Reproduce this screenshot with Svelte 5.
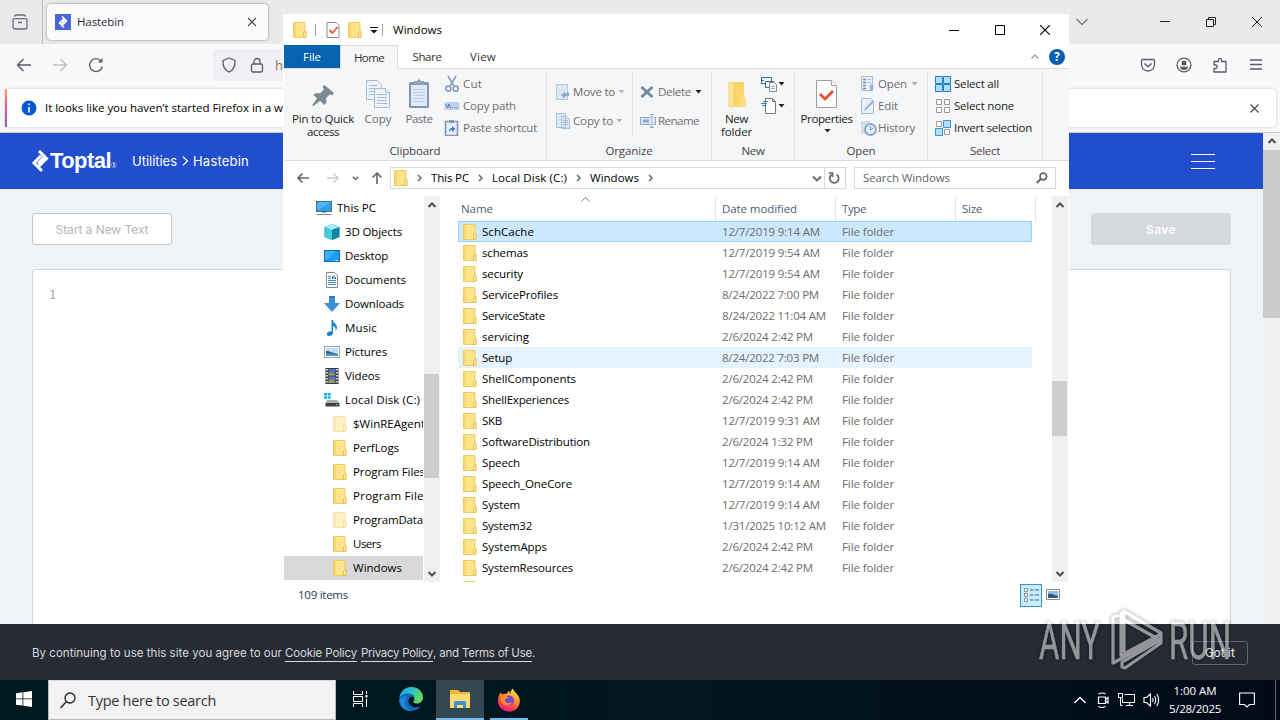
<script>
  // Spreads letter spacing so that a label takes the given width.
  function fit(node, w) {
    if (!w) return;
    const natural = node.getBoundingClientRect().width;
    const n = node.textContent.length;
    node.style.letterSpacing = (w - natural) / n + 'px';
  }

  const tree = [
    ['This PC', 'pc', 0, 39], ['3D Objects', 'cube', 1, 57], ['Desktop', 'desktop', 1, 43],
    ['Documents', 'doc', 1, 61], ['Downloads', 'down', 1, 59], ['Music', 'music', 1, 32],
    ['Pictures', 'pic', 1, 42], ['Videos', 'video', 1, 35], ['Local Disk (C:)', 'disk', 1, 75],
    ['$WinREAgent', 'pale', 2, 72], ['PerfLogs', 'folder', 2, 46], ['Program Files', 'folder', 2, 72],
    ['Program Files (x86)', 'folder', 2, 107], ['ProgramData', 'pale', 2, 70], ['Users', 'folder', 2, 28],
    ['Windows', 'folder', 2, 49]
  ];
  const files = [
    ['SchCache', 52, '12/7/2019 9:14 AM', 98], ['schemas', 46, '12/7/2019 9:54 AM', 98],
    ['security', 41, '12/7/2019 9:54 AM', 98], ['ServiceProfiles', 76, '8/24/2022 7:00 PM', 97],
    ['ServiceState', 63, '8/24/2022 11:04 AM', 104], ['servicing', 47, '2/6/2024 2:42 PM', 91],
    ['Setup', 30, '8/24/2022 7:03 PM', 97], ['ShellComponents', 94, '2/6/2024 2:42 PM', 91],
    ['ShellExperiences', 87, '2/6/2024 2:42 PM', 91], ['SKB', 20, '12/7/2019 9:31 AM', 98],
    ['SoftwareDistribution', 108, '2/6/2024 1:32 PM', 91], ['Speech', 38, '12/7/2019 9:14 AM', 98],
    ['Speech_OneCore', 90, '12/7/2019 9:14 AM', 98], ['System', 38, '12/7/2019 9:14 AM', 98],
    ['System32', 50, '1/31/2025 10:12 AM', 104], ['SystemApps', 65, '2/6/2024 2:42 PM', 91],
    ['SystemResources', 91, '2/6/2024 2:42 PM', 91], ['', 0, '', 0]
  ];
</script>

{#snippet t(text, w)}<span class="t" use:fit={w}>{text}</span>{/snippet}

{#snippet folder(pale)}
  <svg width="14" height="16" viewBox="0 0 14 16" opacity={pale ? 0.5 : 1}>
    <path d="M.5.5h11.500v9.500h1v5.500H.5z" fill="#fde38b" stroke="#eccb63" />
    <path d="M1 1h2v14H1z" fill="#fbd668" />
    <path d="M10.500 15.500v-4.500l1-1.500h1.500v6z" fill="#fbe9a4" stroke="#e3b93f" stroke-width=".8" />
  </svg>
{/snippet}

{#snippet caret(c)}<svg class="caret" width="7" height="4" viewBox="0 0 7 4"><path d="M.5 0h6L3.500 3.500z" fill={c} /></svg>{/snippet}

{#snippet chev(d)}
  <svg width="10" height="10" viewBox="0 0 10 10" fill="none" stroke="#505050" stroke-width="2"><path d={d === 'up' ? 'M1.500 7L5 3.500 8.500 7' : 'M1.500 3L5 6.500 8.500 3'} /></svg>
{/snippet}

{#snippet crumb()}<svg class="crumb" width="5" height="8" viewBox="0 0 5 8" fill="none" stroke="#666" stroke-width="1.500"><path d="M1 1l3 3-3 3" /></svg>{/snippet}

{#snippet treeIcon(k)}
  {#if k === 'folder' || k === 'pale'}
    {@render folder(k === 'pale')}
  {:else}
    <svg width="16" height="16" viewBox="0 0 16 16">
      {#if k === 'pc'}
        <rect x=".5" y="1.500" width="15" height="10" fill="#4db8f0" stroke="#3f6f8f" /><path d="M1 11L15 2v9z" fill="#2d9fe4" /><path d="M1 14.500h14" stroke="#75828a" /><path d="M6 12h4v1H6z" fill="#9aa6ad" />
      {:else if k === 'cube'}
        <path d="M8 0l7.500 3v10L8 16 .5 13V3z" fill="#2cb5c9" /><path d="M8 0l7.500 3L8 6 .5 3z" fill="#a6ecf2" /><path d="M8 6l7.500-3v10L8 16z" fill="#1287a0" /><path d="M8 6v10L.5 13V3z" fill="#42cbd8" />
      {:else if k === 'desktop'}
        <rect x=".5" y="2.500" width="15" height="11" fill="#1c9bf0" stroke="#0e6db8" /><path d="M1 3h11L3 12H1z" fill="#38b0fa" /><path d="M10 12.500h1m1 0h2" stroke="#d4efff" />
      {:else if k === 'doc'}
        <path d="M2.500.5h8l3 3v12h-11z" fill="#fff" stroke="#7b8794" /><path d="M4 4.500h3m-3 2h3m-3 2h8m-8 2h8m-8 2h8" stroke="#4b86bb" /><path d="M8.500 4v3M10 3v4M11.500 5v2" stroke="#2f75b0" />
      {:else if k === 'down'}
        <path d="M5 0h6v7h5l-8 9-8-9h5z" fill="#3d8fd8" /><path d="M5 0h6v2H5z" fill="#2c7cc5" />
      {:else if k === 'music'}
        <path d="M7.500 0h1.500c.3 3.500 4.500 4 4 8-.1 1.300-1 2-1.500 2.600.8-2.700-1-4.100-2.500-4.600V13c0 1.800-1.800 3-3.800 3S2.500 14.800 3 13.200C3.500 11.500 5.800 11 7.500 11.700z" fill="#1a83d4" />
      {:else if k === 'pic'}
        <rect x=".5" y="2.500" width="15" height="11" fill="#fff" stroke="#97a2aa" /><path d="M2 4h12v8H2z" fill="#b9e1f5" /><path d="M2 7c5 0 5 2 12 3v2H2z" fill="#34606f" /><path d="M2 9l12 1.500V12H2z" fill="#4f90c5" />
      {:else if k === 'video'}
        <path d="M1.500 0h13v16h-13z" fill="#3a3a3c" /><path d="M4.500 1h7v6.500h-7z" fill="#4e74b8" /><path d="M4.500 8.500h7V15h-7z" fill="#6b70b8" /><path d="M4.500 6l3-2 4 3.500h-7zM4.500 13l4-2 3 4h-7z" fill="#8fa44b" /><path d="M3 1v15M13 1v15" stroke="#fff" stroke-width="1.500" stroke-dasharray="1.500 1.500" />
      {:else if k === 'disk'}
        <path d="M0 1h3v2.500H0zM3.700 1h3v2.500h-3zM0 4.200h3v2.500H0zM3.700 4.200h3v2.500h-3z" fill="#0bb5d8" /><path d="M3 8h10l2.500 3h-14z" fill="#a9aeb2" /><path d="M1.500 11h14v3.500h-14z" fill="#3c4146" /><path d="M12 12.700h2" stroke="#48e06c" />
      {/if}
    </svg>
  {/if}
{/snippet}

<div class="screen">
  <div class="firefox">
    <div class="tabbar">
      <div class="view"><svg width="18" height="18" viewBox="0 0 18 18" fill="none" stroke="#6b6b72" stroke-width="1.300"><rect x="2" y="5.700" width="14" height="10.300" rx="2" /><path d="M3.500 3.500C4 2 4.500 2 5.500 2h7c1 0 1.500 0 2 1.500M7 9.500h4" /></svg></div>
      <div class="tab">
        <svg width="16" height="16" viewBox="0 0 16 16"><path d="M0 0h16v16H0z" fill="#4867d6" /><path d="M7 2.500l4.500 4.500-4 4M9 13.500L4.500 9l4-4M6 10.500l4-5" fill="none" stroke="#fff" stroke-width="1.600" /></svg>
        <span class="tabname">{@render t('Hastebin', 47)}</span>
        <svg width="10" height="10" viewBox="0 0 10 10" stroke="#47474c" stroke-width="1.100"><path d="M1 1l8 8M9 1L1 9" /></svg>
      </div>
      <div class="fill"></div>
      <svg class="tabmenu" width="14" height="8" viewBox="0 0 14 8" fill="none" stroke="#77777d" stroke-width="1.300"><path d="M1.500 1L7 6.500 12.500 1" /></svg>
      <div class="wctl"><svg width="10" height="10" viewBox="0 0 10 10" stroke="#222"><path d="M0 4.500h10" /></svg></div>
      <div class="wctl"><svg width="10" height="10" viewBox="0 0 10 10" fill="none" stroke="#222"><path d="M.5 2.500h7v7h-7zM2.500 2.500v-2h7v7h-2" /></svg></div>
      <div class="wctl"><svg width="10" height="10" viewBox="0 0 10 10" stroke="#222"><path d="M0 0l10 10M10 0L0 10" /></svg></div>
    </div>
    <div class="navbar">
      <svg class="nb" width="16" height="16" viewBox="0 0 16 16" fill="none" stroke="#5b5b66" stroke-width="1.400"><path d="M15 8H1.500M7.500 2L1.500 8l6 6" /></svg>
      <svg class="nb" width="16" height="16" viewBox="0 0 16 16" fill="none" stroke="#bfbfc6" stroke-width="1.400"><path d="M1 8h13.500M8.500 2l6 6-6 6" /></svg>
      <svg class="nb" width="16" height="16" viewBox="0 0 16 16" fill="none" stroke="#5b5b66" stroke-width="1.400"><path d="M14.300 9.500A6.400 6.400 0 1 1 13 4" /><path d="M14.500.8v4.700H10z" fill="#5b5b66" stroke="none" /></svg>
      <div class="url">
        <svg width="16" height="16" viewBox="0 0 16 16" fill="none" stroke="#5b5b66" stroke-width="1.300"><path d="M8 1l6 2.500c.3 5-1.500 9.500-6 11.500-4.500-2-6.300-6.500-6-11.500z" stroke-linejoin="round" /></svg>
        <svg width="16" height="16" viewBox="0 0 16 16" fill="none" stroke="#5b5b66" stroke-width="1.300"><rect x="2.500" y="7" width="11" height="8" rx="1.500" /><path d="M5 7V4.500a3 3 0 0 1 6 0V7" /></svg>
        <span>h</span>
      </div>
      <div class="tools">
        <svg width="16" height="16" viewBox="0 0 16 16" fill="none" stroke="#5b5b66" stroke-width="1.300"><path d="M2.500 2.500h11q1 0 1 1V7.500a6.500 6.500 0 0 1-13 0v-4q0-1 1-1z" /><path d="M4.500 6.500L8 9.800l3.500-3.300" stroke-width="1.500" /></svg>
        <svg width="16" height="16" viewBox="0 0 16 16"><circle cx="8" cy="8" r="6.900" fill="none" stroke="#5b5b66" stroke-width="1.300" /><circle cx="8" cy="6" r="2.500" fill="#5b5b66" /><path d="M4 9.800h8c0 1.700-1.500 3.200-4 3.200s-4-1.500-4-3.200z" fill="#5b5b66" /></svg>
        <svg width="16" height="16" viewBox="0 0 16 16" fill="none" stroke="#5b5b66" stroke-width="1.300"><path d="M2 15V11.500h1.500a1.500 1.500 0 0 0 0-3.500H2V4.500h4.500V3a1.500 1.500 0 0 1 3.200 0v1.500H14V15z" stroke-linejoin="round" /></svg>
        <svg width="16" height="16" viewBox="0 0 16 16" stroke="#5b5b66" stroke-width="1.300"><path d="M2 3h12M2 7.500h12M2 12h12" /></svg>
      </div>
    </div>
    <div class="infobar">
      <div class="card">
        <svg width="16" height="16" viewBox="0 0 16 16"><circle cx="8" cy="8" r="7.500" fill="#0757cf" /><path d="M8 3.500v1.800M8 7v5.500" stroke="#fff" stroke-width="1.500" /></svg>
        <span class="msg">{@render t('It looks like you haven’t started Firefox in a wh', 245)}</span>
        <svg width="9" height="9" viewBox="0 0 9 9" stroke="#47474c" stroke-width="1.100"><path d="M.5.5l8 8M8.500.5l-8 8" /></svg>
      </div>
    </div>
    <div class="content">
      <div class="page">
        <div class="top">
          <svg width="17" height="24" viewBox="0 0 17 24" fill="none" stroke="#fff" stroke-width="3"><path d="M7 2l7.500 7.500L7 17M10 22L2 13.800l7-7M6 14.500l6-6" /></svg>
          <span class="logo">{@render t('Toptal', 61)}</span><span class="reg">®</span>
          <span class="link">{@render t('Utilities', 45)}</span>
          <svg class="sep" width="7" height="10" viewBox="0 0 7 10" fill="none" stroke="#fff" stroke-width="1.200"><path d="M1 .8L5.500 5 1 9.200" /></svg>
          <span class="link">{@render t('Hastebin', 56)}</span>
          <div class="burger"><i></i><i></i><i></i></div>
        </div>
        <div class="actions"><div class="btn">{@render t('Start a New Text', 93)}</div><div class="btn save">{@render t('Save', 30)}</div></div>
        <div class="editor">1</div>
      </div>
      <div class="pagescroll">{@render chev('up')}<div class="pthumb"></div></div>
    </div>
    <div class="cookie">
      <div class="ctext">{@render t('By continuing to use this site you agree to our', 250)}<u class="l1">{@render t('Cookie Policy', 72)}</u><u class="l2">{@render t('Privacy Policy', 72)}</u>{@render t(', and', 26)}<u class="l3">{@render t('Terms of Use', 70)}</u>.</div>
      <div class="got">{@render t('Got it', 30)}</div>
    </div>
  </div>

  <div class="explorer">
    <div class="title">
      <div class="quick">{@render folder()}<i class="bar b1"></i>
        <svg class="chk" width="14" height="16" viewBox="0 0 14 16"><path d="M1 .5h9l3 3v12H1z" fill="#fff" stroke="#858b94" /><path d="M3.500 8l3 3 5-6" fill="none" stroke="#e15a36" stroke-width="1.800" /></svg>
        {@render folder()}
        <svg class="drop" width="8" height="7" viewBox="0 0 8 7"><path d="M0 .5h8" stroke="#111" /><path d="M.5 3h7L4 6.500z" fill="#111" /></svg>
        <i class="bar b2"></i>{@render t('Windows', 49)}
      </div>
      <div class="ectl"><svg width="10" height="10" viewBox="0 0 10 10" stroke="#000"><path d="M0 5.500h10" /></svg></div>
      <div class="ectl"><svg width="10" height="10" viewBox="0 0 10 10" fill="none" stroke="#000"><path d="M.5.5h9v9h-9z" /></svg></div>
      <div class="ectl"><svg width="10" height="10" viewBox="0 0 10 10" stroke="#000" stroke-width="1.100"><path d="M0 0l10 10M10 0L0 10" /></svg></div>
    </div>
    <div class="tabs">
      <div class="file">{@render t('File', 18)}</div>
      <div class="rtab home">{@render t('Home', 30)}</div>
      <div class="rtab">{@render t('Share', 29)}</div>
      <div class="rtab vw">{@render t('View', 26)}</div>
      <div class="fill"></div>
      <svg width="8" height="5" viewBox="0 0 8 5" fill="none" stroke="#999" stroke-width="1.200"><path d="M.5 4.500L4 1l3.500 3.500" /></svg>
      <div class="help">?</div>
    </div>
    <div class="ribbon">
      <div class="group g1">
        <div class="tools-row">
          <div class="big pin">
            <svg width="32" height="34" viewBox="0 0 32 34"><path d="M17.500 7l9.500 8-2 2.200-2.500-.7-3.500 4 .5 4-2 2.500-4.500-4L6.500 28l-1.500-.5 5-7-3.500-3.500 2.200-2 4.300.5 4-4-1.500-2.500z" fill="#7c8a90" /></svg>
            {@render t('Pin to Quick', 62)}{@render t('access', 32)}
          </div>
          <div class="big copy dim">
            <svg width="32" height="34" viewBox="0 0 32 34" fill="#edf3fb" stroke="#a9bbd8"><path d="M4.500 2.500h11l4 4v15h-15z" /><path d="M7 7.500h8m-8 3h10m-10 3h10m-10 3h10" /><path d="M12.500 10.500h11l4 4v15h-15z" /><path d="M23.500 10.500v4h4M15 16.500h10m-10 3h10m-10 3h10m-10 3h10" /></svg>
            {@render t('Copy', 27)}
          </div>
          <div class="big paste dim">
            <svg width="32" height="34" viewBox="0 0 32 34"><rect x="6" y="4" width="20" height="26" rx="1.500" fill="#8296b4" /><path d="M8 7h16v21H8z" fill="#dfe9f7" /><path d="M10 11.500h12m-12 3h12m-12 3h12m-12 3h12m-12 3h12" stroke="#bccce5" /><path d="M11 3h3l2-2 2 2h3v4H11z" fill="#95a2b3" /></svg>
            {@render t('Paste', 27)}
          </div>
          <div class="col dim">
            <div><svg width="16" height="18" viewBox="0 0 16 18" fill="none" stroke="#8ba0b8" stroke-width="1.700"><path d="M4 1l6 10M12 1L6 11" /><circle cx="4.300" cy="13.700" r="2.500" /><circle cx="11.700" cy="13.700" r="2.500" /></svg>{@render t('Cut', 19)}</div>
            <div><svg width="16" height="16" viewBox="0 0 16 16"><path d="M.5 4h15v8H.5z" fill="#bfd2ed" /><path d="M2 6l1.500 4L5 6l1.500 4M8 9.500h1m1.500 0h1m1.500 0h1" fill="none" stroke="#587eb7" /></svg>{@render t('Copy path', 53)}</div>
            <div><svg width="16" height="16" viewBox="0 0 16 16"><path d="M1.500 1.500h12v14h-12z" fill="#e3ecf8" stroke="#8798b2" stroke-width="1.600" /><path d="M5 0h5v3H5z" fill="#8798b2" /><path d="M5 12c0-3 1-4 3-4V6l3.500 3L8 12v-2c-1.500 0-2 .5-3 2z" fill="#4879bd" /></svg>{@render t('Paste shortcut', 74)}</div>
          </div>
        </div>
        <div class="gname">{@render t('Clipboard', 51)}</div>
      </div>
      <div class="group g2">
        <div class="tools-row">
          <div class="col2 first dim">
            <div><svg width="14" height="16" viewBox="0 0 14 16"><path d="M.5.500h11v15H.5z" fill="#dbe7f5" stroke="#b3c7e3" /><path d="M13 9v3H9v2.500L5 11l4-3.500v2h2V8z" fill="#8aa9cf" /></svg>{@render t('Move to', 42)}{@render caret('#b0b5ba')}</div>
            <div><svg width="14" height="16" viewBox="0 0 14 16" stroke="#abc0dd" fill="#dbe7f5"><path d="M.5.5h9v14h-9zM5.500 3.500h5l3 3v9h-8z" /><path d="M7 7.500h5m-5 2h5m-5 2h5" /></svg>{@render t('Copy to', 40)}{@render caret('#b0b5ba')}</div>
          </div>
          <div class="col2 second dim">
            <div><svg width="14" height="14" viewBox="0 0 14 14" stroke="#75879c" stroke-width="2.900"><path d="M1.500 2l11 10M12.500 2l-11 10" /></svg>{@render t('Delete', 33)}{@render caret('#222')}</div>
            <div><svg width="16" height="16" viewBox="0 0 16 16" fill="none" stroke="#8fa8ca"><path d="M10.500 4.500H.5v7h10M13.500 4.500h2v7h-2" fill="#dde8f6" /><path d="M3 8h6" stroke-width="3" /><path d="M10 1.500h4m-2 0v13m-2 0h4" /></svg>{@render t('Rename', 41)}</div>
          </div>
        </div>
        <div class="gname">{@render t('Organize', 47)}</div>
      </div>
      <div class="group g3">
        <div class="tools-row">
          <div class="big newf">
            <svg width="32" height="34" viewBox="0 0 32 34"><path d="M7 4h16v17h2v8H7z" fill="#fbd568" /><path d="M7 4l5 2v25l-5-3z" fill="#fce59a" /><path d="M19 29v-7l2-3h4v10z" fill="#fbdc80" /></svg>
            {@render t('New', 23)}{@render t('folder', 31)}
          </div>
          <div class="col news">
            <div><svg width="16" height="16" viewBox="0 0 16 16" fill="#f4f8fb"><path d="M.5 1.500h10v6H.5z" stroke="#2e6f92" /><path d="M3 4.500H1M4.500 5.500h8v6h-8z" stroke="#2e6f92" /><path d="M8.500 6.500h5l2 2v7h-7z" stroke="#858c92" /><path d="M10 10.500h4m-4 2h4" stroke="#aaa" /></svg>{@render caret('#222')}</div>
            <div><svg width="16" height="16" viewBox="0 0 16 16"><path d="M4.500.5h7l3 3v12h-10z" fill="#fff" stroke="#777" /><path d="M11.500.5v3h3" fill="none" stroke="#777" /><path d="M2 3.500h5m-7 2h6m-5 2h4" stroke="#3281b5" /></svg>{@render caret('#222')}</div>
          </div>
        </div>
        <div class="gname">{@render t('New', 23)}</div>
      </div>
      <div class="group g4">
        <div class="tools-row">
          <div class="big prop">
            <svg width="32" height="34" viewBox="0 0 32 34" fill="#fdfdfd"><path d="M5.500 2.500h15l5 5v22h-20z" stroke="#999fa5" /><path d="M20.500 2.500v5h5" stroke="#999fa5" /><path d="M9 16l5 5 8-8" fill="none" stroke="#df572c" stroke-width="2.800" /></svg>
            {@render t('Properties', 52)}{@render caret('#222')}
          </div>
          <div class="col openc dim">
            <div><svg width="14" height="16" viewBox="0 0 14 16"><path d="M.5.5h11v14H.5z" fill="#e9f0fa" stroke="#a9bad2" /><path d="M2 3.500h3m-3 3h3m-3 3h3m-3 3h3" stroke="#6c8ec1" stroke-width="1.500" /><path d="M6 3.500h4m-4 3h4" stroke="#aabfdd" /><path d="M9 15v-4H7.500L10.500 8l3 3H12v4z" fill="#9db2d1" /></svg>{@render t('Open', 29)}{@render caret('#a5aab0')}</div>
            <div><svg width="14" height="16" viewBox="0 0 14 16"><path d="M.5.5h9l3 3v12H.5z" fill="#e9f0fa" stroke="#a9bad2" /><path d="M3 13l1-3 8-8 1.500 1.500-8 8z" fill="#9bb4d6" /></svg>{@render t('Edit', 20)}</div>
            <div class="hist"><svg width="16" height="16" viewBox="0 0 16 16"><path d="M0 1h9v13H0z" fill="#d2dfef" /><circle cx="9.500" cy="9.500" r="5.500" fill="#e4edf8" stroke="#8ba5c7" stroke-width="1.800" /><path d="M9.500 6v4l3-2" fill="none" stroke="#7593ba" /></svg>{@render t('History', 37)}</div>
          </div>
        </div>
        <div class="gname">{@render t('Open', 29)}</div>
      </div>
      <div class="group g5">
        <div class="tools-row">
          <div class="col">
            <div><svg width="16" height="16" viewBox="0 0 16 16" fill="#b5ddfa" stroke="#1883cd"><path d="M.5.500h7v7h-7zM8.500.5h7v7h-7zM.5 8.500h7v7h-7zM8.500 8.500h7v7h-7z" /></svg>{@render t('Select all', 45)}</div>
            <div><svg width="16" height="16" viewBox="0 0 16 16" fill="#fff" stroke="#9b9b9b"><path d="M1.500 1.500h5v5h-5zM9.500 1.500h5v5h-5zM1.500 9.500h5v5h-5zM9.500 9.500h5v5h-5z" /></svg>{@render t('Select none', 60)}</div>
            <div><svg width="16" height="16" viewBox="0 0 16 16"><path d="M1.500 1.500h5v5h-5zM9.500 9.500h5v5h-5z" fill="#fff" stroke="#9b9b9b" /><path d="M8.500.5h7v7h-7zM.5 8.500h7v7h-7z" fill="#b5ddfa" stroke="#3591d0" /></svg>{@render t('Invert selection', 78)}</div>
          </div>
        </div>
        <div class="gname">{@render t('Select', 30)}</div>
      </div>
    </div>
    <div class="address">
      <svg width="12" height="12" viewBox="0 0 12 12" fill="none" stroke="#666" stroke-width="1.600"><path d="M12 6H1M5.500 1.500L1 6l4.500 4.500" /></svg>
      <svg class="a2" width="12" height="12" viewBox="0 0 12 12" fill="none" stroke="#ccc" stroke-width="1.400"><path d="M0 6h11M6.500 1.500L11 6l-4.500 4.500" /></svg>
      <svg class="a3" width="7" height="5" viewBox="0 0 7 5" fill="none" stroke="#666" stroke-width="1.500"><path d="M.8.8L3.500 3.500 6.200.8" /></svg>
      <svg class="a4" width="12" height="12" viewBox="0 0 12 12" fill="none" stroke="#666" stroke-width="1.600"><path d="M6 12V1M1.500 5.500L6 1l4.500 4.500" /></svg>
      <div class="path">
        {@render folder()}{@render crumb()}{@render t('This PC', 38)}{@render crumb()}{@render t('Local Disk (C:)', 75)}{@render crumb()}{@render t('Windows', 49)}{@render crumb()}
        <div class="fill"></div>
        <svg width="10" height="10" viewBox="0 0 10 10" fill="none" stroke="#666" stroke-width="1.900"><path d="M1 3.500l4 4 4-4" /></svg>
        <div class="reload"><svg width="12" height="12" viewBox="0 0 12 12" fill="none" stroke="#666" stroke-width="1.700"><path d="M8.500 2.500A4.500 4.500 0 1 1 3.500 2.700M1 1h3.500v4" /></svg></div>
      </div>
      <div class="search">{@render t('Search Windows', 87)}<svg width="12" height="12" viewBox="0 0 12 12" fill="none" stroke="#666"><circle cx="7.300" cy="4.500" r="3.300" stroke-width="1.700" /><path d="M4.800 7L.8 11" stroke-width="2" /></svg></div>
    </div>
    <div class="main">
      <div class="tree">
        {#each tree as [name, icon, depth, w]}
          <div class="node d{depth}" class:sel={name === 'Windows'}>{@render treeIcon(icon)}{@render t(name, w)}</div>
        {/each}
      </div>
      <div class="sb">{@render chev('up')}<div class="thumb th1"></div><div class="fill"></div>{@render chev('down')}</div>
      <div class="list">
        <div class="head">
          <div class="c1">{@render t('Name', 32)}<svg width="9" height="5" viewBox="0 0 9 5" fill="none" stroke="#777"><path d="M.5 4.500l4-4 4 4" /></svg></div>
          <div class="c2">{@render t('Date modified', 75)}</div><div class="c3">{@render t('Type', 24)}</div><div class="c4">{@render t('Size', 20)}</div>
        </div>
        {#each files as [name, w, date, dw], i}
          <div class="row" class:on={i === 0} class:hover={i === 6}>
            <div class="n">{@render folder()}{#if name}{@render t(name, w)}{/if}</div>
            {#if name}<div class="d">{@render t(date, dw)}</div><div>{@render t('File folder', 52)}</div>{/if}
          </div>
        {/each}
      </div>
      <div class="sb">{@render chev('up')}<div class="thumb th2"></div><div class="fill"></div>{@render chev('down')}</div>
    </div>
    <div class="status">
      {@render t('109 items', 50)}
      <div class="fill"></div>
      <div class="mode"><svg width="18" height="16" viewBox="0 0 18 16" fill="#fff" stroke="#8a8f94"><path d="M2.500 1.500h3v3h-3zM2.500 6.500h3v3h-3zM2.500 11.500h3v3h-3z" /><path d="M8 3h3.500m1.500 0h4M8 8h3.500m1.500 0h4M8 13h3.500m1.500 0h4" stroke="#466170" /></svg></div>
      <svg width="14" height="12" viewBox="0 0 14 12"><path d="M.5.5h13v10H.5z" fill="#fff" stroke="#8e8790" /><path d="M2 2h10v7H2z" fill="#8dbdeb" /><path d="M2 5c4-1 5 1 10 2v2H2z" fill="#315d73" /></svg>
    </div>
  </div>

  <div class="taskbar">
    <div class="tb"><svg width="16" height="16" viewBox="0 0 16 16" fill="#fff"><path d="M0 2.200L6.500 1.300v6.200H0zM7.300 1.200L16 0v7.500H7.300zM0 8.300h6.500v6.200L0 13.700zM7.300 8.300H16V16l-8.700-1.300z" /></svg></div>
    <div class="tsearch"><svg width="16" height="17" viewBox="0 0 16 17" fill="none" stroke="#222" stroke-width="1.300"><circle cx="10" cy="6" r="5" /><path d="M6.500 9.500L.5 16" /></svg>{@render t('Type here to search', 128)}</div>
    <div class="tb"><svg width="16" height="16" viewBox="0 0 16 16" fill="none" stroke="#fff"><path d="M1.500 0v3.500h9V0M1.500 16v-3.500h9V16M1.500 5.500h9v5h-9zM14.500 0v3M14.500 8v8" /><path d="M13.500 4h2v2.500h-2z" fill="#fff" stroke="none" /></svg></div>
    <div class="tb edge"><svg width="24" height="24" viewBox="0 0 24 24">
      <defs><linearGradient id="ea" x1="0" y1="0" x2="1" y2=".4"><stop offset="0" stop-color="#1ca7e5" /><stop offset=".55" stop-color="#2bc3c6" /><stop offset="1" stop-color="#63d957" /></linearGradient></defs>
      <path d="M.3 11.500C1 4.500 6 0 12.300 0 19.500 0 24 5 24 10.200c0 4-3 6.300-6.300 6.300-2.500 0-4.200-1-3-2.500 2-3-.7-6.500-5-6.500C5 7.500 1.500 9.500.3 11.500z" fill="url(#ea)" />
      <path d="M.2 12.500C1 8.500 5 6.500 9 6.500c4 0 6 2 6.500 4-1.500-1.300-5-1.500-6 2.500-1 4.500 3.500 7.500 8 7.300 2.200 0 3.700-.6 4.800-1.200C19.500 22.500 16 24 12 24 5 24 0 18.500.2 12.500z" fill="#1266bd" />
      <path d="M8 9.500C4 14 6 22.500 13.500 23.900 5 25 .5 18.500.2 13 2.500 9.500 5.500 9 8 9.500z" fill="#1689d8" /></svg></div>
    <div class="tb act"><svg width="22" height="20" viewBox="0 0 22 20"><path d="M1 1h8l2 2h10v16H1z" fill="#f6b52f" /><path d="M1 5h20v14H1z" fill="#ffda75" /><path d="M5 19v-6q0-1 1-1h10q1 0 1 1v6h-3v-3H8v3z" fill="#3c91ce" /></svg></div>
    <div class="tb run"><svg width="24" height="24" viewBox="0 0 24 24">
      <defs><linearGradient id="fa" x1=".8" y1="0" x2=".3" y2="1"><stop offset="0" stop-color="#fff04f" /><stop offset=".4" stop-color="#ff9a28" /><stop offset=".75" stop-color="#ff3f4c" /><stop offset="1" stop-color="#e31587" /></linearGradient></defs>
      <path d="M3.500 4.500L5.300 6.500C7 5.500 8.500 5.700 9.500 6L12 2.500 13 6c.5-2 1-4 3-5.500C16 3.500 22.500 6 22.800 12.500 23 19 18.500 23.500 12 23.500S1 19 1 13c0-3 .8-6 2.500-8.500z" fill="url(#fa)" />
      <circle cx="12" cy="12.500" r="5" fill="#7947d7" /><path d="M4.500 8c3-1.500 4.500.3 7 1.500-1.500 1.500-3.500 1-3.500 3 0 2.500 4 3.700 7 1.500-2 5.500-10 4-11-1-.3-2 0-4 .5-5z" fill="#ff8a27" /></svg></div>
    <div class="fill"></div>
    <div class="tray">
      <svg width="12" height="12" viewBox="0 0 12 12" fill="none" stroke="#fff" stroke-width="1.300"><path d="M.5 9L6 3.500 11.500 9" /></svg>
      <svg class="cam" width="16" height="16" viewBox="0 0 16 16" fill="none" stroke="#fff" stroke-width="1.200"><path d="M3.500 5h7v6.500h-7zM10.500 7.500l2.500-2v5.500l-2.500-2M3.500 2q3.500-2 7 0M3.500 14.500q3.500 2 7 0" /></svg>
      <svg width="17" height="16" viewBox="0 0 17 16" fill="none" stroke="#fff"><path d="M6.500 2.500h10v8h-12v-4M8 13.500h7M11.500 10.500v3M.5 1.500h4v4h-4zM2.500 5.500v8h2" /></svg>
      <svg width="18" height="16" viewBox="0 0 18 16" fill="none" stroke="#fff" stroke-width="1.100"><path d="M1 5.500h2.500L7.500 2v12l-4-3.500H1zM9.500 6q1.200 2 0 4M11.500 4q2.500 4 0 8M13.800 2q3.700 6 0 12" /></svg>
    </div>
    <div class="clock">{@render t('1:00 AM', 43)}{@render t('5/28/2025', 52)}</div>
    <svg class="note" width="16" height="16" viewBox="0 0 16 16" fill="none" stroke="#fff" stroke-width="1.100"><path d="M.6 1h14.800v11.500H10.500L8 15l-2.500-2.500H.6z" /></svg>
    <i class="peek"></i>
  </div>

  <svg class="mark" width="196" height="66" viewBox="0 0 196 66">
    <g fill="#fff" stroke="#fff" stroke-width=".5"><text x="1" y="52" textLength="61" lengthAdjust="spacingAndGlyphs">ANY</text><text x="131" y="52" textLength="62" lengthAdjust="spacingAndGlyphs">RUN</text></g>
    <g fill="none" stroke="#fff" stroke-width="3.200" stroke-linejoin="round">
      <path d="M81 8.500l-6 1.500v46l45-24.500M86 45V4.500L123 26v4M86 4.500l-3 2v42L123 27" />
      <path d="M86 13l36 20-38 22v5l3 1 36-25v-6" />
    </g>
  </svg>
</div>

<style>
  :global(body) { margin: 0; overflow: hidden; }
  .screen, .screen * { box-sizing: border-box; }
  .screen { width: 1280px; height: 720px; position: relative; overflow: hidden; font: 11.5px/16px "Open Sans", "Noto Sans", sans-serif; color: #000; display: flex; flex-direction: column; }
  svg { flex: none; display: block; }
  .t { display: inline-block; white-space: pre; flex: none; }
  .fill { flex: 1; }
  .firefox { height: 680px; display: flex; flex-direction: column; }
  .tabbar { height: 44px; background: #eaeaed; display: flex; align-items: center; }
  .view { width: 43px; height: 44px; border-right: 1px solid #bcbcc2; display: flex; align-items: center; padding-left: 11px; }
  .tab { width: 221px; height: 36px; margin-left: 4px; background: #fbfbfd; border-radius: 4px; box-shadow: 0 0 3px rgba(0,0,0,.4); display: flex; align-items: center; padding: 0 11px 0 8px; }
  .tabname { flex: 1; padding-left: 6px; color: #2b2a33; }
  .tabmenu { margin-right: 53px; }
  .wctl { width: 46px; display: flex; justify-content: center; }
  .navbar { height: 41px; background: #f9f9fb; display: flex; align-items: center; padding: 0 16px; gap: 20px; }
  .url { margin-left: 89px; width: 700px; height: 32px; background: #f0f0f4; border-radius: 4px; display: flex; align-items: center; gap: 12px; padding-left: 8px; font-size: 13px; color: #8a7168; }
  .url span { margin-left: -2px; }
  .tools { margin-left: auto; display: flex; gap: 20px; }
  .infobar { height: 48px; background: #f9f9fb; border-bottom: 1px solid #ccc; padding: 4px 4px 5px 5px; }
  .card { height: 38px; background: #fff; border-radius: 4px; box-shadow: 0 0 3px rgba(0,0,0,.2); border-left: 2px solid; border-image: linear-gradient(#ffa05c, #d957a6, #9059c4) 1; display: flex; align-items: center; padding: 0 17px 0 14px; }
  .msg { flex: 1; padding-left: 8px; }
  .content { flex: 1; min-height: 0; display: flex; }
  .page { width: 1263px; background: #eff3f6; display: flex; flex-direction: column; }
  .top { height: 56px; background: #204ecf; color: #fff; display: flex; align-items: center; padding: 0 48px 0 32px; flex: none; }
  .logo { font: 700 22px/24px "Liberation Sans", Arial, sans-serif; margin-left: 1px; }
  .reg { font-size: 7px; width: 21px; padding-top: 9px; opacity: .8; }
  .link { font: 13px/18px Inter, sans-serif; }
  .sep { margin: 0 4px 0 5px; }
  .burger { margin-left: auto; width: 24px; display: flex; flex-direction: column; gap: 6px; }
  .burger i { height: 1px; background: #fff; }
  .actions { display: flex; justify-content: space-between; padding: 24px 32px; flex: none; }
  .btn { width: 140px; height: 32px; border: 1px solid #c4c6ca; border-radius: 3px; background: #fff; color: #b4b6ba; display: flex; align-items: center; justify-content: center; font: 12px/16px Inter, sans-serif; padding-top: 2px; }
  .save { background: #d5d8dc; border-color: #d5d8dc; color: #fff; font-weight: 600; }
  .editor { flex: 1; margin: 0 32px; border: 1px solid #ced4dd; border-bottom: 0; border-radius: 3px 3px 0 0; background: #fff; padding: 17px 16px; color: #a5a8ac; font: 12px/17px "DejaVu Sans Mono", monospace; }
  .pagescroll { width: 17px; background: #f0f0f0; display: flex; flex-direction: column; align-items: center; padding-top: 3px; }
  .pthumb { width: 17px; height: 168px; margin-top: 4px; background: #cbcbcb; }
  .cookie { height: 56px; background: #262b34; color: #d8dadd; display: flex; align-items: center; justify-content: space-between; padding: 2px 32px 0; font: 11.5px/15px Inter, sans-serif; }
  .ctext { display: flex; }
  .cookie u { display: flex; text-decoration: none; box-shadow: 0 1px 0 #d8dadd; }
  .l1 { margin-left: 3px; } .l2 { margin-left: 4px; } .l3 { margin-left: 3px; }
  .got { width: 56px; height: 24px; border: 1px solid #606773; border-radius: 3px; display: flex; align-items: center; justify-content: center; color: #fff; }

  .explorer { position: absolute; left: 283px; top: 14px; width: 786px; height: 594px; background: #fff; display: flex; flex-direction: column; padding-left: 1px; }
  .title { height: 31px; display: flex; align-items: center; flex: none; padding-right: 1px; }
  .quick { flex: 1; display: flex; align-items: center; padding-left: 9px; }
  .bar { width: 1px; height: 12px; background: #a5a5a5; }
  .b1 { margin-left: 8px; }
  .b2 { margin: 0 10px 0 4px; }
  .chk { margin: 0 8px 0 10px; }
  .drop { margin: 2px 0 0 8px; }
  .ectl { width: 45.5px; display: flex; justify-content: center; }
  .tabs { height: 24px; flex: none; display: flex; align-items: center; border-bottom: 1px solid #dadbdc; padding-right: 4px; }
  .file, .rtab { display: flex; align-items: center; justify-content: center; align-self: flex-start; }
  .file { width: 56px; height: 23px; background: #0563b1; color: #fff; }
  .rtab { width: 58px; height: 24px; flex: none; color: #333; }
  .home { background: #f5f6f7; border: 1px solid #dadbdc; border-bottom: 0; }
  .vw { width: 54px; }
  .help { width: 16px; height: 16px; border-radius: 8px; background: #0a5fb4; color: #fff; font-weight: 700; text-align: center; margin-left: 10px; }
  .ribbon { height: 92px; flex: none; background: #f5f6f7; border-bottom: 1px solid #dadbdc; display: flex; padding-top: 4px; color: #222; }
  .group { height: 86px; border-right: 1px solid #e0e2e4; display: flex; flex-direction: column; }
  .tools-row { height: 70px; display: flex; }
  .gname { display: flex; justify-content: center; color: #444; line-height: 16px; height: 16px; }
  .g1 { width: 263px; } .g2 { width: 165px; } .g3 { width: 83px; } .g4 { width: 133px; } .g5 { width: 115px; }
  .dim { color: #6d6d6d; }
  .big { display: flex; flex-direction: column; align-items: center; line-height: 13px; padding-top: 4px; }
  .big > svg:first-child { height: 34px; margin-top: 1px; }
  .big .caret { margin-top: 4px; }
  .pin { width: 78px; } .copy { width: 32px; } .paste { width: 50px; }
  .col { display: flex; flex-direction: column; }
  .col > div { height: 22px; display: flex; align-items: center; gap: 3px; }
  .caret { margin-left: 1px; }
  .col2 { display: flex; flex-direction: column; padding-top: 4px; }
  .col2 > div { height: 29px; display: flex; align-items: center; gap: 2px; }
  .first { width: 77px; margin-left: 9px; border-right: 1px solid #e0e2e4; height: 63px; }
  .first > div { gap: 3px; }
  .first .caret { margin-left: 0; }
  .second { padding-left: 7px; }
  .second > div:first-child { gap: 4px; }
  .second .caret { margin-left: 0; }
  .newf { width: 49px; }
  .col.news > div { gap: 0; }
  .prop { width: 63px; }
  .openc { padding-left: 3px; }
  .col .hist { gap: 1px; }
  .g5 .col { padding-left: 7px; }
  .address { height: 35px; flex: none; display: flex; align-items: center; padding: 0 13px 1px 13px; }
  .a2 { margin-left: 18px; } .a3 { margin-left: 13px; } .a4 { margin-left: 12px; }
  .path { margin-left: 7px; width: 456px; height: 22px; border: 1px solid #d9d9d9; display: flex; align-items: center; padding-left: 3px; }
  .crumb { margin: 0 9px 0 9px; }
  .reload { width: 21px; height: 20px; margin-left: 2px; border-left: 1px solid #d9d9d9; display: flex; align-items: center; padding-left: 3px; }
  .search { margin-left: 8px; width: 202px; height: 22px; border: 1px solid #d9d9d9; display: flex; align-items: center; justify-content: space-between; padding: 0 7px 0 8px; color: #666; }
  .main { height: 386px; flex: none; display: flex; overflow: hidden; }
  .tree { width: 139px; overflow: hidden; flex: none; }
  .node { height: 24px; display: flex; align-items: center; gap: 5px; }
  .d0 { padding-left: 32px; } .d1 { padding-left: 40px; } .d2 { padding-left: 49px; }
  .d2 { gap: 6px; }
  .sb { width: 16px; flex: none; margin-left: 1px; background: #f0f0f0; display: flex; flex-direction: column; align-items: center; padding: 4px 0 3px; }
  .sel { background: #d9d9d9; }
  .thumb { width: 15px; background: #cdcdcd; margin-right: 1px; }
  .th1 { height: 104px; margin-top: 164px; }
  .th2 { height: 55px; margin-top: 171px; }
  .list { width: 577px; margin: 0 16px 0 18px; flex: none; }
  .head { height: 24px; margin-top: 1px; display: flex; color: #4c607a; }
  .head > div { height: 24px; border-right: 1px solid #e5e5e5; padding-top: 4px; padding-left: 6px; flex: none; }
  .head > .c1 { width: 258px; padding-left: 3px; display: flex; }
  .c1 svg { margin: -4px 0 0 88px; }
  .c2, .c3 { width: 120px; } .c4 { width: 80px; }
  .row { width: 574px; height: 21px; display: flex; align-items: center; color: #6d6d6d; }
  .n { width: 264px; display: flex; align-items: center; gap: 5px; padding-left: 5px; color: #000; }
  .d { width: 120px; }
  .on { background: #cce8ff; box-shadow: inset 0 0 0 1px #99d1ff; }
  .hover { background: #e5f3ff; }
  .status { height: 26px; display: flex; align-items: center; padding: 0 9px 0 14px; color: #1e395b; }
  .mode { width: 22px; height: 23px; border: 1px solid #3995b8; background: #c5edff; display: flex; align-items: center; justify-content: center; margin-right: 4px; }

  .taskbar { height: 40px; background: linear-gradient(90deg, #00191f, #011620 55%, #020a18); display: flex; align-items: center; }
  .tb { width: 48px; height: 40px; display: flex; align-items: center; justify-content: center; border-bottom: 2px solid transparent; }
  .edge { margin-left: 3px; }
  .act { margin-left: 1px; background: #33484e; border-color: #76b9ed; }
  .run { margin-left: 1px; background: linear-gradient(#76b9ed, #76b9ed) center bottom / 38px 2px no-repeat; border-bottom: 0; }
  .tsearch { width: 288px; height: 40px; background: #f2f2f2; border: 1px solid #b9bcbe; border-top-color: #ddd; display: flex; align-items: center; gap: 12px; padding: 2px 0 0 11px; font-size: 14.5px; line-height: 20px; color: #333; }
  .tsearch svg { margin-top: -2px; }
  .tray { display: flex; align-items: center; gap: 8px; margin-right: 7px; }
  .cam { margin: 0 -1px 0 1px; }
  .clock { width: 54px; display: flex; flex-direction: column; align-items: center; color: #fff; line-height: 18px; margin-right: 17px; }
  .note { margin-right: 20px; }
  .peek { width: 1px; height: 40px; background: #566069; margin-right: 4px; }
  .mark { position: absolute; left: 1038px; top: 607px; opacity: .5; filter: drop-shadow(0 0 2px rgba(0,0,0,.8)); }
  .mark text { font: 400 51px Roboto, sans-serif; }
</style>
